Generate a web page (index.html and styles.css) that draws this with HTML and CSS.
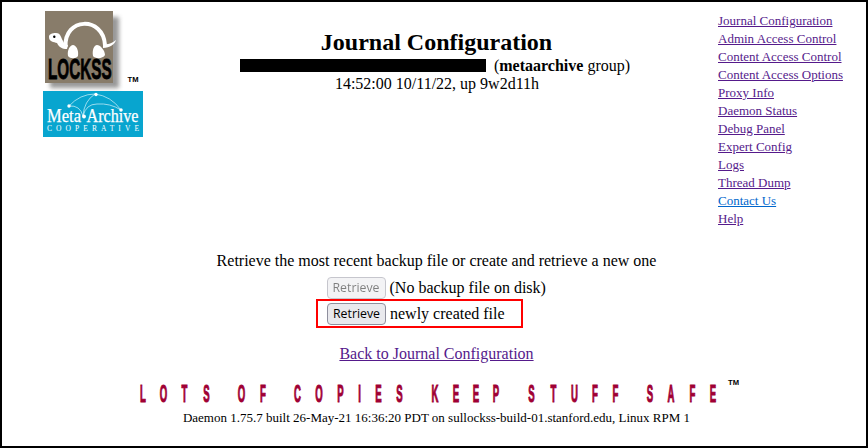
FILE: index.html
```html
<!DOCTYPE html>
<html lang="en">
<head>
<meta charset="utf-8">
<title>Journal Configuration</title>
<link rel="stylesheet" href="styles.css">
</head>
<body>
<div class="page">
  <header class="header">
    <div class="logos">
      <svg class="lockss" width="105" height="84" viewBox="0 0 105 84" role="img" aria-label="LOCKSS">
        <defs><filter id="soft" x="-20%" y="-20%" width="140%" height="140%"><feGaussianBlur stdDeviation="2"/></filter></defs>
        <rect x="7" y="8" width="69" height="71" fill="#777" opacity=".75" filter="url(#soft)"/>
        <rect x="2" y="2" width="68" height="72" fill="#887c6a"/>
        <path d="M22.500 38C21 8 60 7 62 36" fill="none" stroke="#fff" stroke-width="4"/>
        <path d="M6 28c0-3 3-4 7-4 5 0 5 5 7 8 1 3 3 3 5 4l-1 4c-5 0-8-2-10-6-3-1-8-1-8-6zM60 35c4 1 8 0 13-4-1 4-6 8-13 8z" fill="#fff"/>
        <circle cx="11.300" cy="27.700" r="1.200" fill="#000"/>
        <g transform="translate(5 69.500) scale(.53 1)"><text class="lockss-name" textLength="120" lengthAdjust="spacingAndGlyphs">LOCKSS</text></g>
        <path d="M25 47c-1-6 2-11 5-11s6 5 5 11c-2 3-8 3-10 0zM50 47c-1-6 1-11 4-11s8 5 8 10c-2 4-10 4-12 1z" fill="#fff"/>
        <text class="tm" x="84.500" y="73" textLength="11" lengthAdjust="spacingAndGlyphs">TM</text>
      </svg>
      <svg class="meta" width="100" height="46" viewBox="0 0 100 46" role="img" aria-label="MetaArchive Cooperative">
        <rect width="100" height="46" fill="#08a5cf"/>
        <path d="M26 15Q37 3 52 3Q68 5 78 19M52 3Q41 10 40 25M40 25Q43 13 54 13Q67 12 78 19M26 15Q37 14 40 25" fill="none" stroke="#d5f2fa" stroke-width=".7"/>
        <g fill="#fff"><circle cx="26" cy="15" r="1.700"/><circle cx="53" cy="3.500" r="1.700"/><circle cx="78" cy="19" r="1.700"/><circle cx="41" cy="25.500" r="1.900"/></g>
        <text class="meta-name" x="4" y="31" textLength="34" lengthAdjust="spacingAndGlyphs">Meta</text>
        <text class="meta-name" x="43.500" y="31" textLength="52" lengthAdjust="spacingAndGlyphs">Archive</text>
        <text class="coop" x="4" y="39.500" textLength="92">COOPERATIVE</text>
      </svg>
    </div>
    <div class="heading">
      <h1>Journal Configuration</h1>
      <div class="host"><span class="redacted"></span><span>(<b>metaarchive</b> group)</span></div>
      <div class="uptime">14:52:00 10/11/22, up 9w2d11h</div>
    </div>
    <nav class="nav">
      <a href="#">Journal Configuration</a>
      <a href="#">Admin Access Control</a>
      <a href="#">Content Access Control</a>
      <a href="#">Content Access Options</a>
      <a href="#">Proxy Info</a>
      <a href="#">Daemon Status</a>
      <a href="#">Debug Panel</a>
      <a href="#">Expert Config</a>
      <a href="#">Logs</a>
      <a href="#">Thread Dump</a>
      <a href="#" class="contact">Contact Us</a>
      <a href="#">Help</a>
    </nav>
  </header>
  <main class="main">
    <p class="intro">Retrieve the most recent backup file or create and retrieve a new one</p>
    <div class="row"><button disabled>Retrieve</button><span>(No backup file on disk)</span></div>
    <div class="row marked"><button>Retrieve</button><span>newly created file</span></div>
    <a class="back" href="#">Back to Journal Configuration</a>
  </main>
  <footer class="footer">
    <svg class="slogan" width="610" height="30" viewBox="0 0 610 30" role="img" aria-label="Lots of copies keep stuff safe">
      <g transform="translate(-135 26) scale(.4 1)">
        <text class="slogan-text" x="357.500 408.750 461.250 516.250 603.750 657.500 743.750 797.500 851.250 898.750 946.250 998.750 1087.500 1140 1190 1240 1328.750 1383.750 1436.250 1487.500 1538.750 1625 1677.500 1731.250 1782.500">LOTSOFCOPIESKEEPSTUFFSAFE</text>
      </g>
      <text class="tm" x="593" y="9" textLength="11" lengthAdjust="spacingAndGlyphs">TM</text>
    </svg>
    <div class="build">Daemon 1.75.7 built 26-May-21 16:36:20 PDT on sullockss-build-01.stanford.edu, Linux RPM 1</div>
  </footer>
</div>
</body>
</html>
```
FILE: styles.css
```css
* { box-sizing: border-box; }
body {
  margin: 0;
  background: #fff;
  color: #000;
  font: 16px/18px "Liberation Serif", "Times New Roman", serif;
}
.page {
  width: 868px;
  height: 448px;
  border: 2px solid #000;
  overflow: hidden;
}
.header {
  display: grid;
  grid-template-columns: 193px 480px 1fr;
  height: 236px;
}
svg { display: block; overflow: visible; }
.logos { padding: 7px 0 0 41px; }
.meta { margin-top: -2px; }
.lockss-name {
  font: bold 29px "Liberation Sans", sans-serif;
  stroke: #000;
  stroke-width: .8px;
}
.tm { font: bold 6.5px "Liberation Sans", sans-serif; }
.meta-name {
  font: 18.5px "Liberation Serif", serif;
  fill: #fff;
  stroke: #fff;
  stroke-width: .25px;
}
.coop { font: 7.5px/8px "Liberation Serif", serif; fill: #fff; }
.heading { text-align: center; padding-top: 26px; }
h1 { margin: 0; padding-left: 3px; font-size: 24px; line-height: 28px; }
.host { display: flex; justify-content: center; gap: 8px; padding-top: 1px; }
.redacted { width: 246px; height: 13px; margin-top: 2px; background: #000; }
.uptime { padding-left: 4px; }
.nav {
  display: flex;
  flex-direction: column;
  align-items: flex-start;
  padding: 10px 0 0 43px;
  font-size: 13px;
}
a { color: #551a8b; }
.contact { color: #0066cc; }
.main {
  display: flex;
  flex-direction: column;
  align-items: center;
  height: 139px;
  padding: 14px 0 0 5px;
}
.intro { margin: 0 0 5px; }
.row {
  display: flex;
  align-items: center;
  gap: 4px;
  width: 220px;
  height: 26px;
}
.marked {
  width: 207px;
  height: 29px;
  margin: -2px 34px 0 0;
  padding-left: 9px;
  border: 2px solid #f00;
}
button {
  width: 59px;
  height: 22px;
  padding: 0;
  border: 1px solid #8f8f9d;
  border-radius: 4px;
  background: #e9e9ed;
  color: #000;
  font: 12.3px/18px "Open Sans", sans-serif;
}
button:disabled { opacity: .5; }
.back { margin-top: 17px; }
.footer { text-align: center; }
.slogan { margin: -1px 0 0 133px; }
.slogan-text {
  font: bold 24px "Liberation Sans", sans-serif;
  fill: #a00034;
  stroke: #a00034;
  stroke-width: 1.1px;
  text-anchor: middle;
}
.build { margin: 3px 0 0 5px; font-size: 13px; }
```
